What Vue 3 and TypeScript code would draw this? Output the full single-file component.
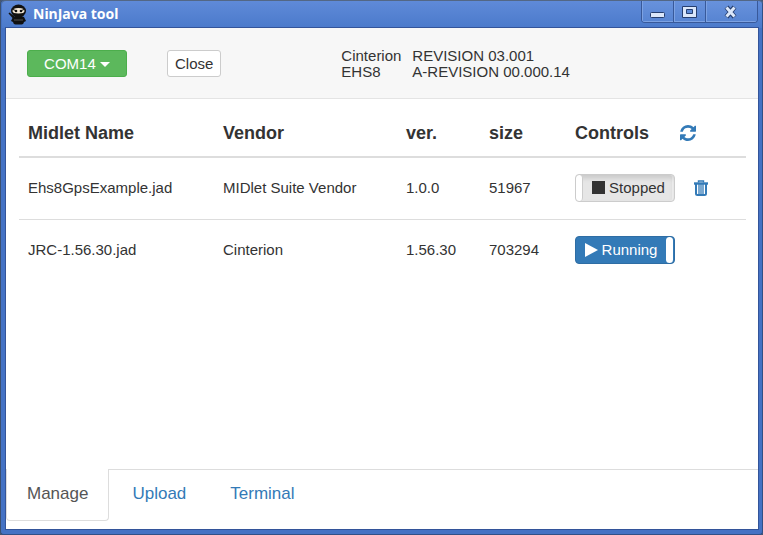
<script setup lang="ts">
import { ref } from 'vue'

interface Midlet {
  name: string
  vendor: string
  version: string
  size: number
  running: boolean
}

const midlets = ref<Midlet[]>([
  { name: 'Ehs8GpsExample.jad', vendor: 'MIDlet Suite Vendor', version: '1.0.0', size: 51967, running: false },
  { name: 'JRC-1.56.30.jad', vendor: 'Cinterion', version: '1.56.30', size: 703294, running: true },
])

const tabs = ['Manage', 'Upload', 'Terminal']
const activeTab = ref('Manage')

function remove(midlet: Midlet) {
  midlets.value = midlets.value.filter((m) => m !== midlet)
}
</script>

<template>
  <div class="window">
    <header class="titlebar">
      <svg class="app-icon" viewBox="0 0 20 21" aria-hidden="true">
        <path d="M0.500 9.500l1-1 5 4-1.500 2z" fill="#111" />
        <path d="M5 13q5.500-3 11 0l2 4-2 1q-.5 2.500-2.500 2.500h-6Q5.500 20.500 5 18l-2-1z" fill="#111" />
        <ellipse cx="10.500" cy="7" rx="7.500" ry="6.500" fill="#111" />
        <path d="M4.500 7q0-3 6-3t6 3q0 2.500-6 2.500T4.500 7z" fill="#f5ead8" />
        <path d="M5 5.500l4 1.500M16 5.500L12 7" stroke="#111" />
        <circle cx="8" cy="7" r="1.300" fill="#111" />
        <circle cx="13" cy="7" r="1.300" fill="#111" />
        <path d="M6 16h9" stroke="#555" />
      </svg>
      <h1 class="title">NinJava tool</h1>
      <div class="window-buttons">
        <button type="button" aria-label="Minimize">
          <svg width="18" height="14" viewBox="0 0 18 14"><rect x="1.500" y="7.500" width="14" height="5" rx="1" fill="#dbe7fa" stroke="#263f70" /></svg>
        </button>
        <button type="button" aria-label="Maximize">
          <svg width="18" height="14" viewBox="0 0 18 14">
            <path d="M1.500 1.500h14v11h-14z" fill="#dbe7fa" stroke="#263f70" />
            <path d="M5.500 4.500h6v4h-6z" fill="#5d8bd8" stroke="#263f70" />
          </svg>
        </button>
        <button type="button" class="wide" aria-label="Close window">
          <svg width="18" height="14" viewBox="0 0 18 14">
            <path d="M3.500 2l8 10M11.500 2l-8 10" stroke="#263f70" stroke-width="5" />
            <path d="M3.500 2.500l8 9M11.500 2.500l-8 9" stroke="#dbe7fa" stroke-width="3" />
          </svg>
        </button>
      </div>
    </header>

    <div class="client">
      <section class="toolbar">
        <button type="button" class="btn port">COM14 <span class="caret"></span></button>
        <button type="button" class="btn close">Close</button>
        <dl class="device">
          <dt>Cinterion</dt>
          <dd>REVISION 03.001</dd>
          <dt>EHS8</dt>
          <dd>A-REVISION 00.000.14</dd>
        </dl>
      </section>

      <main class="content">
        <table class="midlets">
          <colgroup>
            <col class="c-name" /><col class="c-vendor" /><col class="c-version" /><col class="c-size" /><col />
          </colgroup>
          <thead>
            <tr>
              <th>Midlet Name</th>
              <th>Vendor</th>
              <th>ver.</th>
              <th>size</th>
              <th>
                <div class="head-controls">
                  <span>Controls</span>
                  <button type="button" class="icon-btn" aria-label="Refresh">
                    <svg width="16" height="16" viewBox="0 0 1536 1536" fill="currentColor">
                      <path d="M1511 928q0 5-1 7-64 268-268 434.500t-478 166.500q-146 0-282.500-55t-243.500-157l-129 129q-19 19-45 19t-45-19-19-45v-448q0-26 19-45t45-19h448q26 0 45 19t19 45-19 45l-137 137q71 66 161 102t187 36q134 0 250-65t186-179q11-17 53-117 8-23 30-23h192q13 0 22.500 9.500t9.500 22.500zm25-800v448q0 26-19 45t-45 19h-448q-26 0-45-19t-19-45 19-45l138-138q-148-137-349-137-134 0-250 65t-186 179q-11 17-53 117-8 23-30 23h-199q-13 0-22.500-9.500t-9.500-22.500v-7q65-268 270-434.500t480-166.500q146 0 284 55.500t245 156.500l130-129q19-19 45-19t45 19 19 45z" />
                    </svg>
                  </button>
                </div>
              </th>
            </tr>
          </thead>
          <tbody>
            <tr v-for="midlet in midlets" :key="midlet.name">
              <td>{{ midlet.name }}</td>
              <td>{{ midlet.vendor }}</td>
              <td>{{ midlet.version }}</td>
              <td>{{ midlet.size }}</td>
              <td>
                <div class="row-controls">
                  <button
                    type="button"
                    class="toggle"
                    :class="{ on: midlet.running }"
                    :aria-pressed="midlet.running"
                    @click="midlet.running = !midlet.running"
                  >
                    <span class="state">
                      <svg v-if="midlet.running" width="13" height="14" viewBox="0 0 13 14" fill="currentColor"><path d="M0 0l13 7-13 7z" /></svg>
                      <svg v-else width="13" height="14" viewBox="0 0 13 14" fill="currentColor"><path d="M0 0h13v13H0z" /></svg>
                      {{ midlet.running ? 'Running' : 'Stopped' }}
                    </span>
                    <span class="handle"></span>
                  </button>
                  <button v-if="!midlet.running" type="button" class="icon-btn" aria-label="Delete" @click="remove(midlet)">
                    <svg width="14" height="16" viewBox="0 0 14 16" fill="none" stroke="currentColor">
                      <path d="M4.500 2.500v-1.500h5v1.500" stroke-width="1.400" />
                      <path d="M0 3.500h14" stroke-width="2.400" />
                      <path d="M2 4v9.500q0 1.500 1.500 1.500h7q1.500 0 1.500-1.500V4" stroke-width="2" />
                      <path d="M5 4v10M7 4v10M9 4v10" stroke-width="1.300" />
                    </svg>
                  </button>
                </div>
              </td>
            </tr>
          </tbody>
        </table>
      </main>

      <nav class="tabs">
        <a v-for="tab in tabs" :key="tab" href="#" :class="{ active: tab === activeTab }" @click.prevent="activeTab = tab">{{ tab }}</a>
      </nav>
    </div>
  </div>
</template>

<style>
body {
  margin: 0;
  background: #4a5568;
}
</style>

<style scoped>
* {
  box-sizing: border-box;
}
button {
  font: inherit;
  color: inherit;
  cursor: pointer;
}
svg {
  display: block;
}
.window {
  display: flex;
  flex-direction: column;
  min-height: 100vh;
  padding: 0 5px 6px 6px;
  border-radius: 4px;
  background: #4472c4;
  box-shadow: inset 1px 0 #3b5070, inset 0 1px #536785, inset 0 -1px #315086, inset -1px 0 #315086;
  font-family: "Liberation Sans", Arial, sans-serif;
  font-size: 15px;
  line-height: 20px;
  color: #333;
}
.titlebar {
  display: flex;
  align-items: flex-start;
  height: 28px;
  margin: 0 -4px;
  padding: 1px 4px 0;
  background: linear-gradient(#5f8ad8, #4b7acb);
  border-top: 1px solid #536785;
  border-radius: 4px 4px 0 0;
}
.app-icon {
  width: 20px;
  height: 21px;
  margin: 2px 5px 0 2px;
}
.title {
  flex: 1;
  margin: 0;
  font: bold 14px/23px "Noto Sans", sans-serif;
  color: #fff;
}
.window-buttons {
  display: flex;
  height: 22px;
  margin: -1px 0 0;
  border: 1px solid #38599a;
  border-top: 0;
  border-radius: 0 0 4px 4px;
  overflow: hidden;
}
.window-buttons button {
  display: flex;
  justify-content: center;
  align-items: center;
  width: 32px;
  padding: 0;
  border: 0;
  border-right: 1px solid #38599a;
  background: linear-gradient(#6892dc, #5784d2);
  box-shadow: inset 1px -1px #7da2e2;
}
.window-buttons .wide {
  width: 51px;
  border-right: 0;
}
.client {
  display: flex;
  flex: 1;
  flex-direction: column;
  background: #fff;
  box-shadow: 0 0 0 1px #33549a;
}
.toolbar {
  display: flex;
  align-items: flex-start;
  padding: 20px 21px 18px;
  background: #f7f7f7;
  border-bottom: 1px solid #e4e4e4;
}
.btn {
  height: 27px;
  margin-top: 2px;
  padding: 0 7px;
  border: 1px solid #ccc;
  border-radius: 3px;
  background: #fff;
}
.port {
  width: 100px;
  margin-right: 40px;
  border-color: #4cae4c;
  background: #5cb85c;
  color: #fff;
}
.caret {
  display: inline-block;
  vertical-align: middle;
  border: 5px solid transparent;
  border-top-color: #fff;
  border-bottom: 0;
}
.device {
  display: grid;
  grid-template-columns: 71px auto;
  margin: 0 0 0 120px;
  line-height: 16px;
}
.device dd {
  margin: 0;
}
.content {
  flex: 1;
  padding: 10px 12px 10px 13px;
}
.midlets {
  width: 100%;
  border-collapse: collapse;
  table-layout: fixed;
}
.c-name { width: 195px; }
.c-vendor { width: 183px; }
.c-version { width: 83px; }
.c-size { width: 86px; }
th,
td {
  padding: 0 9px;
  text-align: left;
}
th {
  height: 48px;
  border-bottom: 2px solid #ddd;
  font-size: 18px;
}
td {
  height: 62px;
  border-top: 1px solid #ddd;
}
.head-controls,
.row-controls {
  display: flex;
  align-items: center;
}
.head-controls {
  gap: 31px;
}
.row-controls {
  gap: 19px;
}
.icon-btn {
  padding: 0;
  border: 0;
  background: none;
  color: #337ab7;
}
.toggle {
  display: flex;
  width: 100px;
  height: 28px;
  padding: 0;
  border: 1px solid #ccc;
  border-radius: 4px;
  background: #e6e6e6;
  box-shadow: inset 0 3px 5px rgba(0, 0, 0, 0.13), inset -2px 0 #f4f4f4;
  overflow: hidden;
}
.state {
  display: flex;
  flex: 1;
  order: 1;
  gap: 4px;
  align-items: center;
  justify-content: center;
}
.handle {
  width: 7px;
  height: 26px;
  border-right: 1px solid #ccc;
  border-radius: 4px;
  background: #fff;
}
.toggle.on {
  padding-right: 1px;
  border-color: #2e6da4;
  background: #337ab7;
  box-shadow: none;
  color: #fff;
}
.toggle.on .handle {
  order: 2;
  border-right: 0;
}
.tabs {
  display: flex;
  align-items: flex-start;
  gap: 2px;
  padding-bottom: 8px;
  background: linear-gradient(#ddd, #ddd) top / 100% 1px no-repeat;
}
.tabs a {
  padding: 14px 20px 15px;
  border: 1px solid transparent;
  border-top: 0;
  border-radius: 0 0 4px 4px;
  font-size: 17px;
  line-height: 22px;
  color: #337ab7;
  text-decoration: none;
}
.tabs .active {
  border-color: #ddd;
  background: #fff;
  color: #555;
}
</style>
